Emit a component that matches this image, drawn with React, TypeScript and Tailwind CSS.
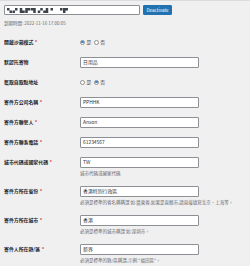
import React from 'react';

const font = { fontFamily: '"Noto Sans CJK TC", "Noto Sans", sans-serif' };

type Row = {
  label: string;
  required?: boolean;
  value?: string;
  radio?: 'yes' | 'no';
  desc?: string;
};

const rows: Row[] = [
  { label: '開啟沙箱模式', required: true, radio: 'yes' },
  { label: '默認托寄物', value: '日用品' },
  { label: '獲取自取點地址', radio: 'no' },
  { label: '寄件方公司名稱', required: true, value: 'PPHHK' },
  { label: '寄件方聯繫人', required: true, value: 'Anson' },
  { label: '寄件方聯系電話', required: true, value: '61234567' },
  { label: '城市代碼或國家代碼', required: true, value: 'TW', desc: '城市代碼或國家代碼' },
  {
    label: '寄件方所在省份',
    required: true,
    value: '香港特別行政區',
    desc: '必須是標準的省名稱稱謂 如:廣東省,如果是直轄市,請直接填寫北京、上海等。',
  },
  { label: '寄件方所在城市', required: true, value: '香港', desc: '必須是標準的城市稱謂 如:深圳市。' },
  { label: '寄件人所在縣/區', required: true, value: '新界', desc: '必須是標準的縣/區稱謂,示例:"福田區"。' },
];

function Radio({ checked, text }: { checked: boolean; text: string }) {
  return (
    <span className="flex items-center gap-[1.5px]">
      <span className="w-[5px] h-[5px] rounded-full border-[0.6px] border-[#8c8f94] bg-white flex items-center justify-center">
        {checked && <span className="w-[2.4px] h-[2.4px] rounded-full bg-[#3582c4]" />}
      </span>
      <span className="text-[4.8px] text-[#3c434a]">{text}</span>
    </span>
  );
}

function FieldRow({ row }: { row: Row }) {
  return (
    <div className="flex items-start py-[4.5px]">
      <div className="w-[76px] h-[11px] flex items-center text-[4.9px] font-semibold text-[#1d2327]">
        {row.label}
        {row.required && <span className="text-[#d63638] ml-[1.5px]">*</span>}
      </div>
      <div className="flex flex-col">
        {row.radio ? (
          <div className="h-[11px] flex items-center gap-[2.5px]">
            <Radio checked={row.radio === 'yes'} text="是" />
            <Radio checked={row.radio === 'no'} text="否" />
          </div>
        ) : (
          <div className="w-[119px] h-[11px] bg-white border-[0.5px] border-[#8c8f94] rounded-[1px] flex items-center px-[2px] text-[4.9px] text-[#2c3338]">
            {row.value}
          </div>
        )}
        {row.desc && (
          <div className="mt-[2px] h-[7px] leading-[7px] text-[4.5px] text-[#646970] whitespace-nowrap">{row.desc}</div>
        )}
      </div>
    </div>
  );
}

export default function App() {
  return (
    <div className="w-[250px] h-[266px] bg-[#f0f0f1] border-t border-[#dcdcde] overflow-hidden pl-[4px]" style={font}>
      <div className="flex items-center gap-[3px] mt-[4px]">
        <div className="w-[136px] h-[10px] bg-white border-[0.5px] border-[#8c8f94] rounded-[1px] flex items-center px-[2px]">
          <span className="text-[5px] font-bold text-[#3c434a] blur-[0.6px] tracking-[0.5px]">▚▞ ▙▛▜ ▞▟ ▘ ▝▛</span>
        </div>
        <div className="w-[29px] h-[10px] bg-[#2271b1] rounded-[1px] border-[0.5px] border-[#2271b1] flex items-center justify-center text-[4.5px] text-white">
          Deactivate
        </div>
      </div>
      <div className="mt-[5px] h-[7px] leading-[7px] text-[4.5px] text-[#646970]">到期時間: 2022-11-16 17:00:05</div>
      <div className="mt-[5px] flex flex-col">
        {rows.map((r) => (
          <FieldRow key={r.label} row={r} />
        ))}
      </div>
    </div>
  );
}
